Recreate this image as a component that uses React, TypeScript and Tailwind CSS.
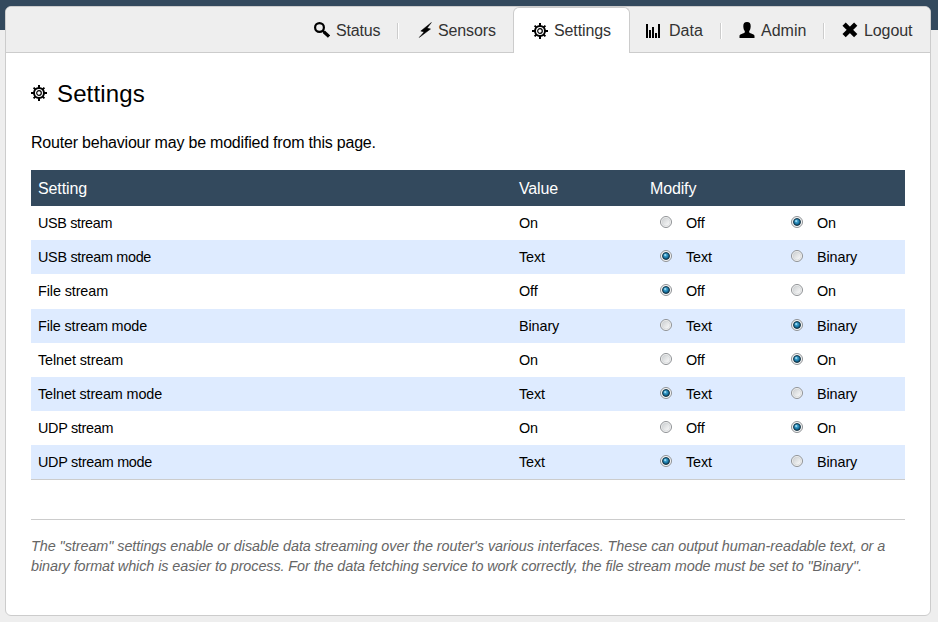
import type { ReactNode } from "react";

const GearIcon = () => (
  <svg width="16" height="16" viewBox="0 0 16 16" fill="none" stroke="#000">
    <circle cx="8" cy="8" r="5" strokeWidth="2" />
    <circle cx="8" cy="8" r="2.3" strokeWidth="1.2" />
    <path
      strokeWidth="2"
      d="M8 0v3M8 13v3M0 8h3M13 8h3M2.6 2.6l2 2M11.4 11.4l2 2M13.4 2.6l-2 2M4.6 11.4l-2 2"
    />
  </svg>
);

const SearchIcon = () => (
  <svg width="16" height="16" viewBox="0 0 16 16" fill="none" stroke="#000">
    <circle cx="5.5" cy="5.5" r="4.4" strokeWidth="2.2" />
    <path strokeWidth="2.4" d="M8.500 8.500l2 2" />
    <path strokeWidth="3.2" d="M10 10l5 4.600" />
  </svg>
);

const BoltIcon = () => (
  <svg width="16" height="16" viewBox="0 0 16 16" fill="#000" stroke="#000" strokeWidth=".5">
    <path d="M15.400 .5L4.800 9L8 10L3.200 15.500L14.500 7L11.200 6Z" />
  </svg>
);

const BarsIcon = () => (
  <svg width="16" height="16" viewBox="0 0 16 16" fill="#000" shapeRendering="crispEdges">
    <path d="M1 2h2v14H1zM4 8h2v8H4zM7 5h2v11H7zM10 11h2v5h-2zM13 2h2v14h-2z" />
  </svg>
);

const UserIcon = () => (
  <svg width="16" height="16" viewBox="0 0 16 16" fill="#000">
    <path d="M8 0C10.600 0 11.800 1.500 11.700 4.200C11.600 6.500 11.100 8 10.200 9V10.600C11.200 11.600 15.500 12.300 15.500 14V16H.5V14C.5 12.300 4.800 11.600 5.800 10.600V9C4.900 8 4.400 6.500 4.300 4.200C4.200 1.500 5.400 0 8 0Z" />
  </svg>
);

const CrossIcon = () => (
  <svg width="16" height="16" viewBox="0 0 16 16" fill="none" stroke="#000">
    <path strokeWidth="4.6" d="M2.100 2.100l11.600 11.600M13.700 2.100L2.100 13.700" />
  </svg>
);

function NavItem({ icon, label, className }: { icon: ReactNode; label: string; className: string }) {
  return (
    <li className={`flex items-center ${className}`}>
      <a href="#" className="flex items-center gap-1.5">
        {icon}
        <span className="pt-0.5">{label}</span>
      </a>
    </li>
  );
}

const Divider = () => <li className="mt-4 h-4 w-0.5 border-l border-r border-l-[#ccc] border-r-white" />;

function Radio({ checked }: { checked: boolean }) {
  return (
    <svg width="12" height="12" viewBox="0 0 12 12">
      <circle cx="6" cy="6" r="5.500" fill="#f8f8f8" stroke="#8e9194" />
      {checked ? (
        <>
          <circle cx="6" cy="6" r="3.500" fill="url(#radioOn)" stroke="#12303f" strokeWidth=".9" />
          <circle cx="5.100" cy="5" r="1" fill="#9fdcf5" />
        </>
      ) : (
        <circle cx="6" cy="6" r="4" fill="url(#radioOff)" stroke="#cfd1d3" strokeWidth=".6" />
      )}
    </svg>
  );
}

const onOff = ["Off", "On"];
const modes = ["Text", "Binary"];

const rows = [
  { name: "USB stream", options: onOff, value: "On", tracking: "tracking-[-0.35px]" },
  { name: "USB stream mode", options: modes, value: "Text", tracking: "tracking-[-0.3px]" },
  { name: "File stream", options: onOff, value: "Off", tracking: "tracking-[-0.1px]" },
  { name: "File stream mode", options: modes, value: "Binary", tracking: "tracking-[-0.13px]" },
  { name: "Telnet stream", options: onOff, value: "On", tracking: "tracking-[-0.1px]" },
  { name: "Telnet stream mode", options: modes, value: "Text", tracking: "tracking-[-0.13px]" },
  { name: "UDP stream", options: onOff, value: "On", tracking: "tracking-[-0.3px]" },
  { name: "UDP stream mode", options: modes, value: "Text", tracking: "tracking-[-0.27px]" },
];

export default function App() {
  return (
    <div className="h-[622px] w-[938px] overflow-hidden bg-[linear-gradient(#33495d_30px,#eeeeee_30px)] pt-1.5 pl-[5px] font-['Liberation_Sans',Arial,sans-serif] text-black">
      <svg className="absolute h-0 w-0">
        <defs>
          <radialGradient id="radioOn" cx=".45" cy=".4" r=".6">
            <stop offset="0" stopColor="#5fbbe0" />
            <stop offset=".6" stopColor="#1878a8" />
            <stop offset="1" stopColor="#0d3c58" />
          </radialGradient>
          <linearGradient id="radioOff" x1="0" y1="0" x2="1" y2="1">
            <stop offset="0" stopColor="#cbced0" />
            <stop offset="1" stopColor="#fdfdfd" />
          </linearGradient>
        </defs>
      </svg>
      <div className="h-[610px] w-[926px] rounded-[6px] border border-[#ccc] bg-white">
        <ul className="flex h-[46px] justify-end rounded-t-[5px] border-b border-[#ccc] bg-[#eee] text-base text-[#333]">
          <NavItem icon={<SearchIcon />} label="Status" className="w-[83px] tracking-[-0.15px]" />
          <Divider />
          <NavItem icon={<BoltIcon />} label="Sensors" className="w-[114px] pl-[17px] tracking-[-0.13px]" />
          <li className="flex h-[46px] w-[117px] items-center rounded-t-[6px] border-x border-t border-[#ccc] bg-white pl-[18px] tracking-[-0.1px]">
            <a href="#" className="flex items-center gap-1.5">
              <GearIcon />
              <span>Settings</span>
            </a>
          </li>
          <NavItem
            icon={
              <span className="mr-0.5">
                <BarsIcon />
              </span>
            }
            label="Data"
            className="w-[90px] pl-[15px]"
          />
          <Divider />
          <NavItem icon={<UserIcon />} label="Admin" className="w-[101px] pl-[17px]" />
          <Divider />
          <NavItem icon={<CrossIcon />} label="Logout" className="w-[105px] pl-[17px] tracking-[-0.1px]" />
        </ul>
        <main className="px-[25px]">
          <h1 className="mt-6 flex h-8 items-center gap-2.5 text-2xl tracking-[0.13px]">
            <GearIcon />
            <span className="pt-0.5">Settings</span>
          </h1>
          <p className="mt-[22px] text-base leading-6 tracking-[-0.21px]">
            Router behaviour may be modified from this page.
          </p>
          <div className="mt-[15px] border-b border-[#ccc] text-[14.4px]">
            <div className="grid h-9 grid-cols-[481px_131px_1fr] items-center bg-[#33495d] pt-0.5 text-base text-white">
              <span className="pl-[7px] tracking-[-0.1px]">Setting</span>
              <span className="pl-[7px] tracking-[-0.15px]">Value</span>
              <span className="pl-[7px] tracking-[-0.15px]">Modify</span>
            </div>
            {rows.map((row) => (
              <div
                key={row.name}
                className="grid h-[34.180px] grid-cols-[481px_131px_131px_131px] items-center odd:bg-[#deebff] even:bg-white"
              >
                <span className={`pt-[1.5px] pl-[7px] ${row.tracking}`}>{row.name}</span>
                <span className="pt-[1.5px] pl-[7px] tracking-[-0.1px]">{row.value}</span>
                {row.options.map((option) => (
                  <label key={option} className="flex items-center gap-3.5 pl-[17px]">
                    <span className="-mt-0.5">
                      <Radio checked={option === row.value} />
                    </span>
                    <span className="pt-[1.5px] tracking-[-0.1px]">{option}</span>
                  </label>
                ))}
              </div>
            ))}
          </div>
          <p className="mt-[39px] border-t border-[#ccc] pt-4 text-[14.4px] leading-5 tracking-[-0.08px] text-[#666] italic first-line:tracking-[-0.055px]">
            The "stream" settings enable or disable data streaming over the router's various interfaces. These can
            output human-readable text, or a binary format which is easier to process. For the data fetching service to
            work correctly, the file stream mode must be set to "Binary".
          </p>
        </main>
      </div>
    </div>
  );
}
